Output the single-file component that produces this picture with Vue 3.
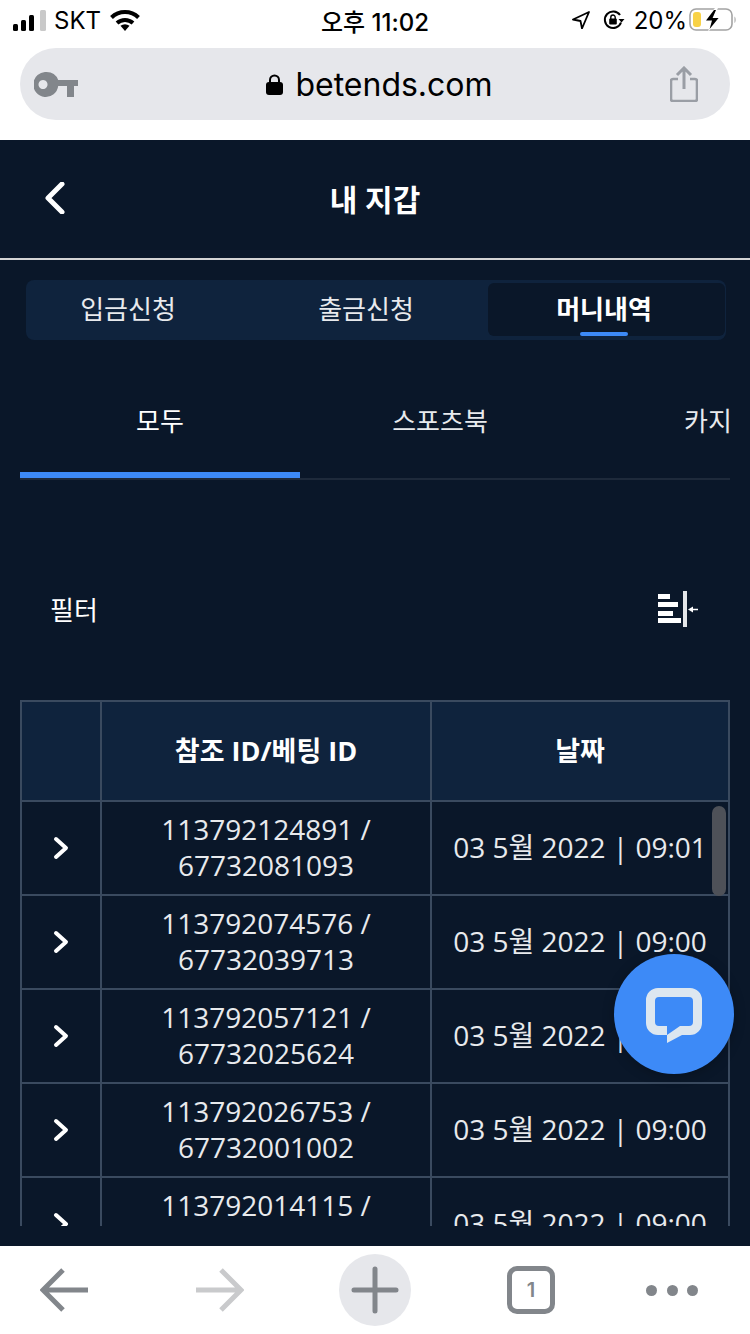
<script setup>
import { ref } from "vue";

const topTabs = ["입금신청", "출금신청", "머니내역"];
const subTabs = ["모두", "스포츠북", "카지노"];
const activeTop = ref(2);
const activeSub = ref(0);

const rows = ref([
  { ref: "113792124891", bet: "67732081093", date: "03 5월 2022 | 09:01" },
  { ref: "113792074576", bet: "67732039713", date: "03 5월 2022 | 09:00" },
  { ref: "113792057121", bet: "67732025624", date: "03 5월 2022 | 09:00" },
  { ref: "113792026753", bet: "67732001002", date: "03 5월 2022 | 09:00" },
  { ref: "113792014115", bet: "67731990417", date: "03 5월 2022 | 09:00" },
]);
</script>

<template>
  <div class="phone">
    <header class="browser-top">
      <div class="status">
        <div class="status-left">
          <svg class="signal" width="33" height="21" viewBox="0 0 33 21">
            <rect x="0" y="14" width="5" height="7" rx="1.5" fill="#000" />
            <rect x="8" y="10" width="5" height="11" rx="1.5" fill="#000" />
            <rect x="16" y="5" width="5" height="16" rx="1.5" fill="#000" />
            <rect x="27" y="0" width="6" height="21" rx="1.5" fill="#c9c9c9" />
          </svg>
          <span class="carrier">SKT</span>
          <svg class="wifi" width="30" height="21" viewBox="0 0 30 21">
            <path d="M1.5 7.5a19.5 19.5 0 0 1 27 0" fill="none" stroke="#000" stroke-width="4" />
            <path d="M7 13a12 12 0 0 1 16 0" fill="none" stroke="#000" stroke-width="4" />
            <path d="M10.5 15.8a7 7 0 0 1 9 0L15 21z" fill="#000" />
          </svg>
        </div>
        <span class="clock">오후 11:02</span>
        <div class="status-right">
          <svg width="18" height="18" viewBox="0 0 18 18">
            <path d="M17 1 1 8.500l7.500 1.500 1.500 7.500z" fill="none" stroke="#000" stroke-width="1.800" stroke-linejoin="round" />
          </svg>
          <svg class="rotation" width="22" height="20" viewBox="0 0 22 20">
            <path d="M18 12.500A8.300 8.300 0 1 1 17 5" fill="none" stroke="#000" stroke-width="2" />
            <path d="M15.500 9h6l-3 3.600z" fill="#000" />
            <rect x="6.200" y="8.500" width="7.600" height="6" rx="1" fill="#000" />
            <path d="M7.800 9V7.200a2.200 2.200 0 0 1 4.400 0V9" fill="none" stroke="#000" stroke-width="1.400" />
          </svg>
          <span class="percent">20%</span>
          <svg class="battery" width="48" height="24" viewBox="0 0 48 24">
            <rect x="1" y="1" width="42" height="21" rx="6" fill="none" stroke="#a3a3a3" stroke-width="1.600" />
            <rect x="4" y="4" width="8" height="15" rx="3" fill="#f8d247" />
            <path d="M26 0 15 13h7l-3 11 12-14h-7l5-10z" fill="#fff" />
            <path d="M25 2 17 12.500h6l-2.400 8.500 9-11h-6l3.400-8z" fill="#000" />
            <path d="M45.500 8.500c1.500.5 1.500 6 0 6.500z" fill="#a3a3a3" />
          </svg>
        </div>
      </div>
      <div class="url-bar">
        <svg class="key" width="44" height="25" viewBox="0 0 44 25">
          <path fill-rule="evenodd" d="M12.500 0a12.500 12.500 0 0 1 11.700 8H44v6h-4v11h-7V14h-8.800a12.500 12.500 0 1 1-11.700-14zM9 8a4.500 4.500 0 1 0 .01 0z" fill="#82868b" />
        </svg>
        <div class="address">
          <svg width="17" height="21" viewBox="0 0 17 21">
            <path d="M4 9V6a4.500 4.500 0 0 1 9 0v3" fill="none" stroke="#000" stroke-width="2" />
            <rect x="0" y="8" width="17" height="13" rx="3" fill="#000" />
          </svg>
          <span>betends.com</span>
        </div>
        <svg class="share" width="28" height="36" viewBox="0 0 28 36">
          <path d="M8 13H3a2 2 0 0 0-2 2v18a2 2 0 0 0 2 2h22a2 2 0 0 0 2-2V15a2 2 0 0 0-2-2h-5" fill="none" stroke="#9a9ea5" stroke-width="2.600" />
          <path d="M14 23V3M7 9l7-7 7 7" fill="none" stroke="#9a9ea5" stroke-width="3" />
        </svg>
      </div>
    </header>

    <main class="content">
      <div class="nav">
        <svg class="back" width="20" height="32" viewBox="0 0 20 32">
          <path d="M17 2 3 16l14 14" fill="none" stroke="#fff" stroke-width="5" stroke-linecap="round" stroke-linejoin="round" />
        </svg>
        <h1>내 지갑</h1>
      </div>

      <div class="segment">
        <button
          v-for="(tab, index) in topTabs"
          :key="tab"
          :class="['seg-tab', { active: activeTop === index }]"
          @click="activeTop = index"
        >
          {{ tab }}
        </button>
      </div>

      <div class="sub-tabs">
        <button
          v-for="(tab, index) in subTabs"
          :key="tab"
          :class="['sub-tab', { active: activeSub === index }]"
          @click="activeSub = index"
        >
          {{ tab }}
        </button>
      </div>

      <div class="filter">
        <span>필터</span>
        <svg width="40" height="36" viewBox="0 0 40 36">
          <rect x="0" y="3" width="12" height="5" fill="#fff" />
          <rect x="0" y="11" width="20" height="5" fill="#fff" />
          <rect x="0" y="20" width="15" height="5" fill="#fff" />
          <rect x="0" y="27" width="23" height="5" fill="#fff" />
          <rect x="25" y="0" width="4" height="36" fill="#e4e6e9" />
          <path d="M40 18.500h-6" stroke="#fff" stroke-width="1.500" />
          <path d="M30 18.500l5-3v6z" fill="#fff" />
        </svg>
      </div>

      <div class="table-wrap">
        <table>
          <thead>
            <tr>
              <th class="col-toggle"></th>
              <th class="col-id">참조 ID/베팅 ID</th>
              <th>날짜</th>
            </tr>
          </thead>
          <tbody>
            <tr v-for="row in rows" :key="row.ref">
              <td>
                <svg class="chevron" width="16" height="24" viewBox="0 0 16 24">
                  <path d="M3 3l10 9-10 9" fill="none" stroke="#fff" stroke-width="4" stroke-linecap="round" stroke-linejoin="round" />
                </svg>
              </td>
              <td class="text-cell">{{ row.ref }} /<br />{{ row.bet }}</td>
              <td class="text-cell">{{ row.date }}</td>
            </tr>
          </tbody>
        </table>
        <div class="scroll-thumb"></div>
      </div>

      <button class="chat">
        <svg width="56" height="55" viewBox="0 0 56 55">
          <path fill-rule="evenodd" d="M12 0h32a12 12 0 0 1 12 12v23a12 12 0 0 1-12 12h-8L21 55v-8h-9A12 12 0 0 1 0 35V12A12 12 0 0 1 12 0zm1 9a4 4 0 0 0-4 4v21a4 4 0 0 0 4 4h8v9l13-9h9a4 4 0 0 0 4-4V13a4 4 0 0 0-4-4z" fill="#dde7f0" />
        </svg>
      </button>
    </main>

    <footer class="browser-bottom">
      <svg class="nav-back" width="48" height="44" viewBox="0 0 48 44">
        <path d="M48 22H4M23 2 3 22l20 20" fill="none" stroke="#82868b" stroke-width="5" />
      </svg>
      <svg class="nav-forward" width="48" height="44" viewBox="0 0 48 44">
        <path d="M0 22h44M25 2l20 20-20 20" fill="none" stroke="#c9cacc" stroke-width="5" />
      </svg>
      <div class="nav-plus">
        <svg width="48" height="48" viewBox="0 0 48 48">
          <path d="M24 3v42M3 24h42" fill="none" stroke="#82868b" stroke-width="5" stroke-linecap="round" />
        </svg>
      </div>
      <div class="nav-count">1</div>
      <div class="nav-more"><i></i><i></i><i></i></div>
    </footer>
  </div>
</template>

<style scoped>
.phone {
  width: 750px;
  height: 1334px;
  display: flex;
  flex-direction: column;
  overflow: hidden;
  background: #fff;
  font-family: "Open Sans", "Noto Sans CJK KR", sans-serif;
}

button {
  border: none;
  background: none;
  color: inherit;
  font: inherit;
  padding: 0;
}

.browser-top {
  height: 140px;
  flex: none;
}

.status {
  height: 48px;
  display: grid;
  grid-template-columns: 1fr auto 1fr;
  align-items: center;
  padding: 0 13px 8px 13px;
  box-sizing: border-box;
  color: #000;
  font-family: Inter, "Noto Sans CJK KR", sans-serif;
}

.status-left,
.status-right {
  display: flex;
  align-items: center;
}

.status-right {
  justify-content: flex-end;
}

.carrier {
  margin-left: 8px;
  font-size: 24px;
}

.wifi {
  margin-left: 9px;
}

.clock {
  font-size: 24px;
  font-weight: 500;
}

.rotation {
  margin-left: 13px;
}

.percent {
  font-size: 24px;
  margin-left: 9px;
}

.battery {
  margin-left: 2px;
}

.url-bar {
  height: 72px;
  margin: 0 20px;
  padding: 0 32px 0 14px;
  border-radius: 36px;
  background: #e6e7eb;
  display: flex;
  align-items: center;
  justify-content: space-between;
}

.address {
  display: flex;
  align-items: center;
  gap: 12px;
  font-family: Inter, sans-serif;
  font-size: 32px;
  color: #000;
  margin-left: 11px;
}

.content {
  flex: 1;
  position: relative;
  background: #0a1729;
  color: #fff;
  min-height: 0;
}

.nav {
  height: 118px;
  display: flex;
  align-items: center;
  justify-content: center;
  position: relative;
  border-bottom: 2px solid #d4d4d4;
}

.back {
  position: absolute;
  left: 45px;
  top: 42px;
}

.nav h1 {
  margin: 0 0 2px;
  font-size: 30px;
  font-weight: 700;
}

.segment {
  margin: 20px 24px 0 26px;
  height: 60px;
  box-sizing: border-box;
  padding: 3px 1px 4px 0;
  display: grid;
  grid-template-columns: 204px 258px 237px;
  background: #0f233d;
  border-radius: 8px;
}

.seg-tab {
  position: relative;
  font-size: 26px;
  color: #e8eaed;
  border-radius: 6px;
  padding-bottom: 3px;
}

.seg-tab:nth-child(2) {
  margin-left: 14px;
}

.seg-tab.active {
  background: #0a1729;
  font-weight: 700;
  color: #fff;
  padding-right: 5px;
}

.seg-tab.active::after {
  content: "";
  position: absolute;
  left: 92px;
  bottom: 0;
  width: 48px;
  height: 4px;
  border-radius: 2px;
  background: #3d8af7;
}

.sub-tabs {
  margin: 32px 20px 0;
  height: 108px;
  display: flex;
  overflow: hidden;
  border-bottom: 2px solid #1e2a3b;
  box-sizing: border-box;
}

.sub-tab {
  flex: 0 0 280px;
  font-size: 26px;
  color: #e8eaed;
  height: 106px;
  padding-bottom: 5px;
  box-sizing: border-box;
  border-bottom: 6px solid transparent;
}

.sub-tab.active {
  border-bottom-color: #3d8af7;
  color: #fff;
}

.filter {
  margin: 100px 52px 60px 50px;
  height: 60px;
  box-sizing: border-box;
  padding-bottom: 2px;
  display: flex;
  align-items: center;
  justify-content: space-between;
  font-size: 26px;
}

.table-wrap {
  position: relative;
  margin: 0 20px;
  height: 526px;
  overflow: hidden;
}

table {
  width: 710px;
  table-layout: fixed;
  border-collapse: separate;
  border-spacing: 0;
  border-top: 2px solid #3a4a5f;
  border-left: 2px solid #3a4a5f;
  box-sizing: border-box;
}

th,
td {
  border-right: 2px solid #3a4a5f;
  border-bottom: 2px solid #3a4a5f;
  text-align: center;
  padding: 0;
  box-sizing: border-box;
}

th {
  height: 100px;
  background: #0f233d;
  font-size: 27px;
  font-weight: 700;
  padding-bottom: 3px;
}

td {
  height: 94px;
  font-size: 28px;
  line-height: 36px;
  color: #e8eaed;
}

.text-cell {
  padding-bottom: 2px;
}

.col-toggle {
  width: 80px;
}

.col-id {
  width: 330px;
}

.chevron {
  display: block;
  margin: 0 auto;
}

.scroll-thumb {
  position: absolute;
  right: 4px;
  top: 106px;
  width: 14px;
  height: 90px;
  border-radius: 7px;
  background: #4e5158;
}

.chat {
  position: absolute;
  left: 614px;
  top: 814px;
  width: 120px;
  height: 120px;
  border-radius: 50%;
  background: #3d8af7;
  display: flex;
  align-items: center;
  justify-content: center;
  box-shadow: 0 2px 12px rgba(0, 0, 0, 0.25);
}

.chat svg {
  margin-top: 2px;
}

.browser-bottom {
  height: 88px;
  flex: none;
  background: #fff;
  display: flex;
  align-items: center;
  padding-left: 40px;
  box-sizing: border-box;
}

.nav-forward {
  margin-left: 108px;
}

.nav-plus {
  margin-left: 95px;
  width: 72px;
  height: 72px;
  border-radius: 50%;
  background: #e6e7eb;
  display: flex;
  align-items: center;
  justify-content: center;
}

.nav-count {
  margin-left: 96px;
  width: 48px;
  height: 48px;
  box-sizing: border-box;
  border: 5px solid #82868b;
  border-radius: 10px;
  display: flex;
  align-items: center;
  justify-content: center;
  font-family: Inter, sans-serif;
  font-size: 20px;
  font-weight: 600;
  color: #82868b;
}

.nav-more {
  margin-left: 91px;
  width: 52px;
  display: flex;
  justify-content: space-between;
}

.nav-more i {
  width: 11px;
  height: 11px;
  border-radius: 50%;
  background: #82868b;
}
</style>

<style>
html,
body {
  margin: 0;
  background: #fff;
}
</style>
